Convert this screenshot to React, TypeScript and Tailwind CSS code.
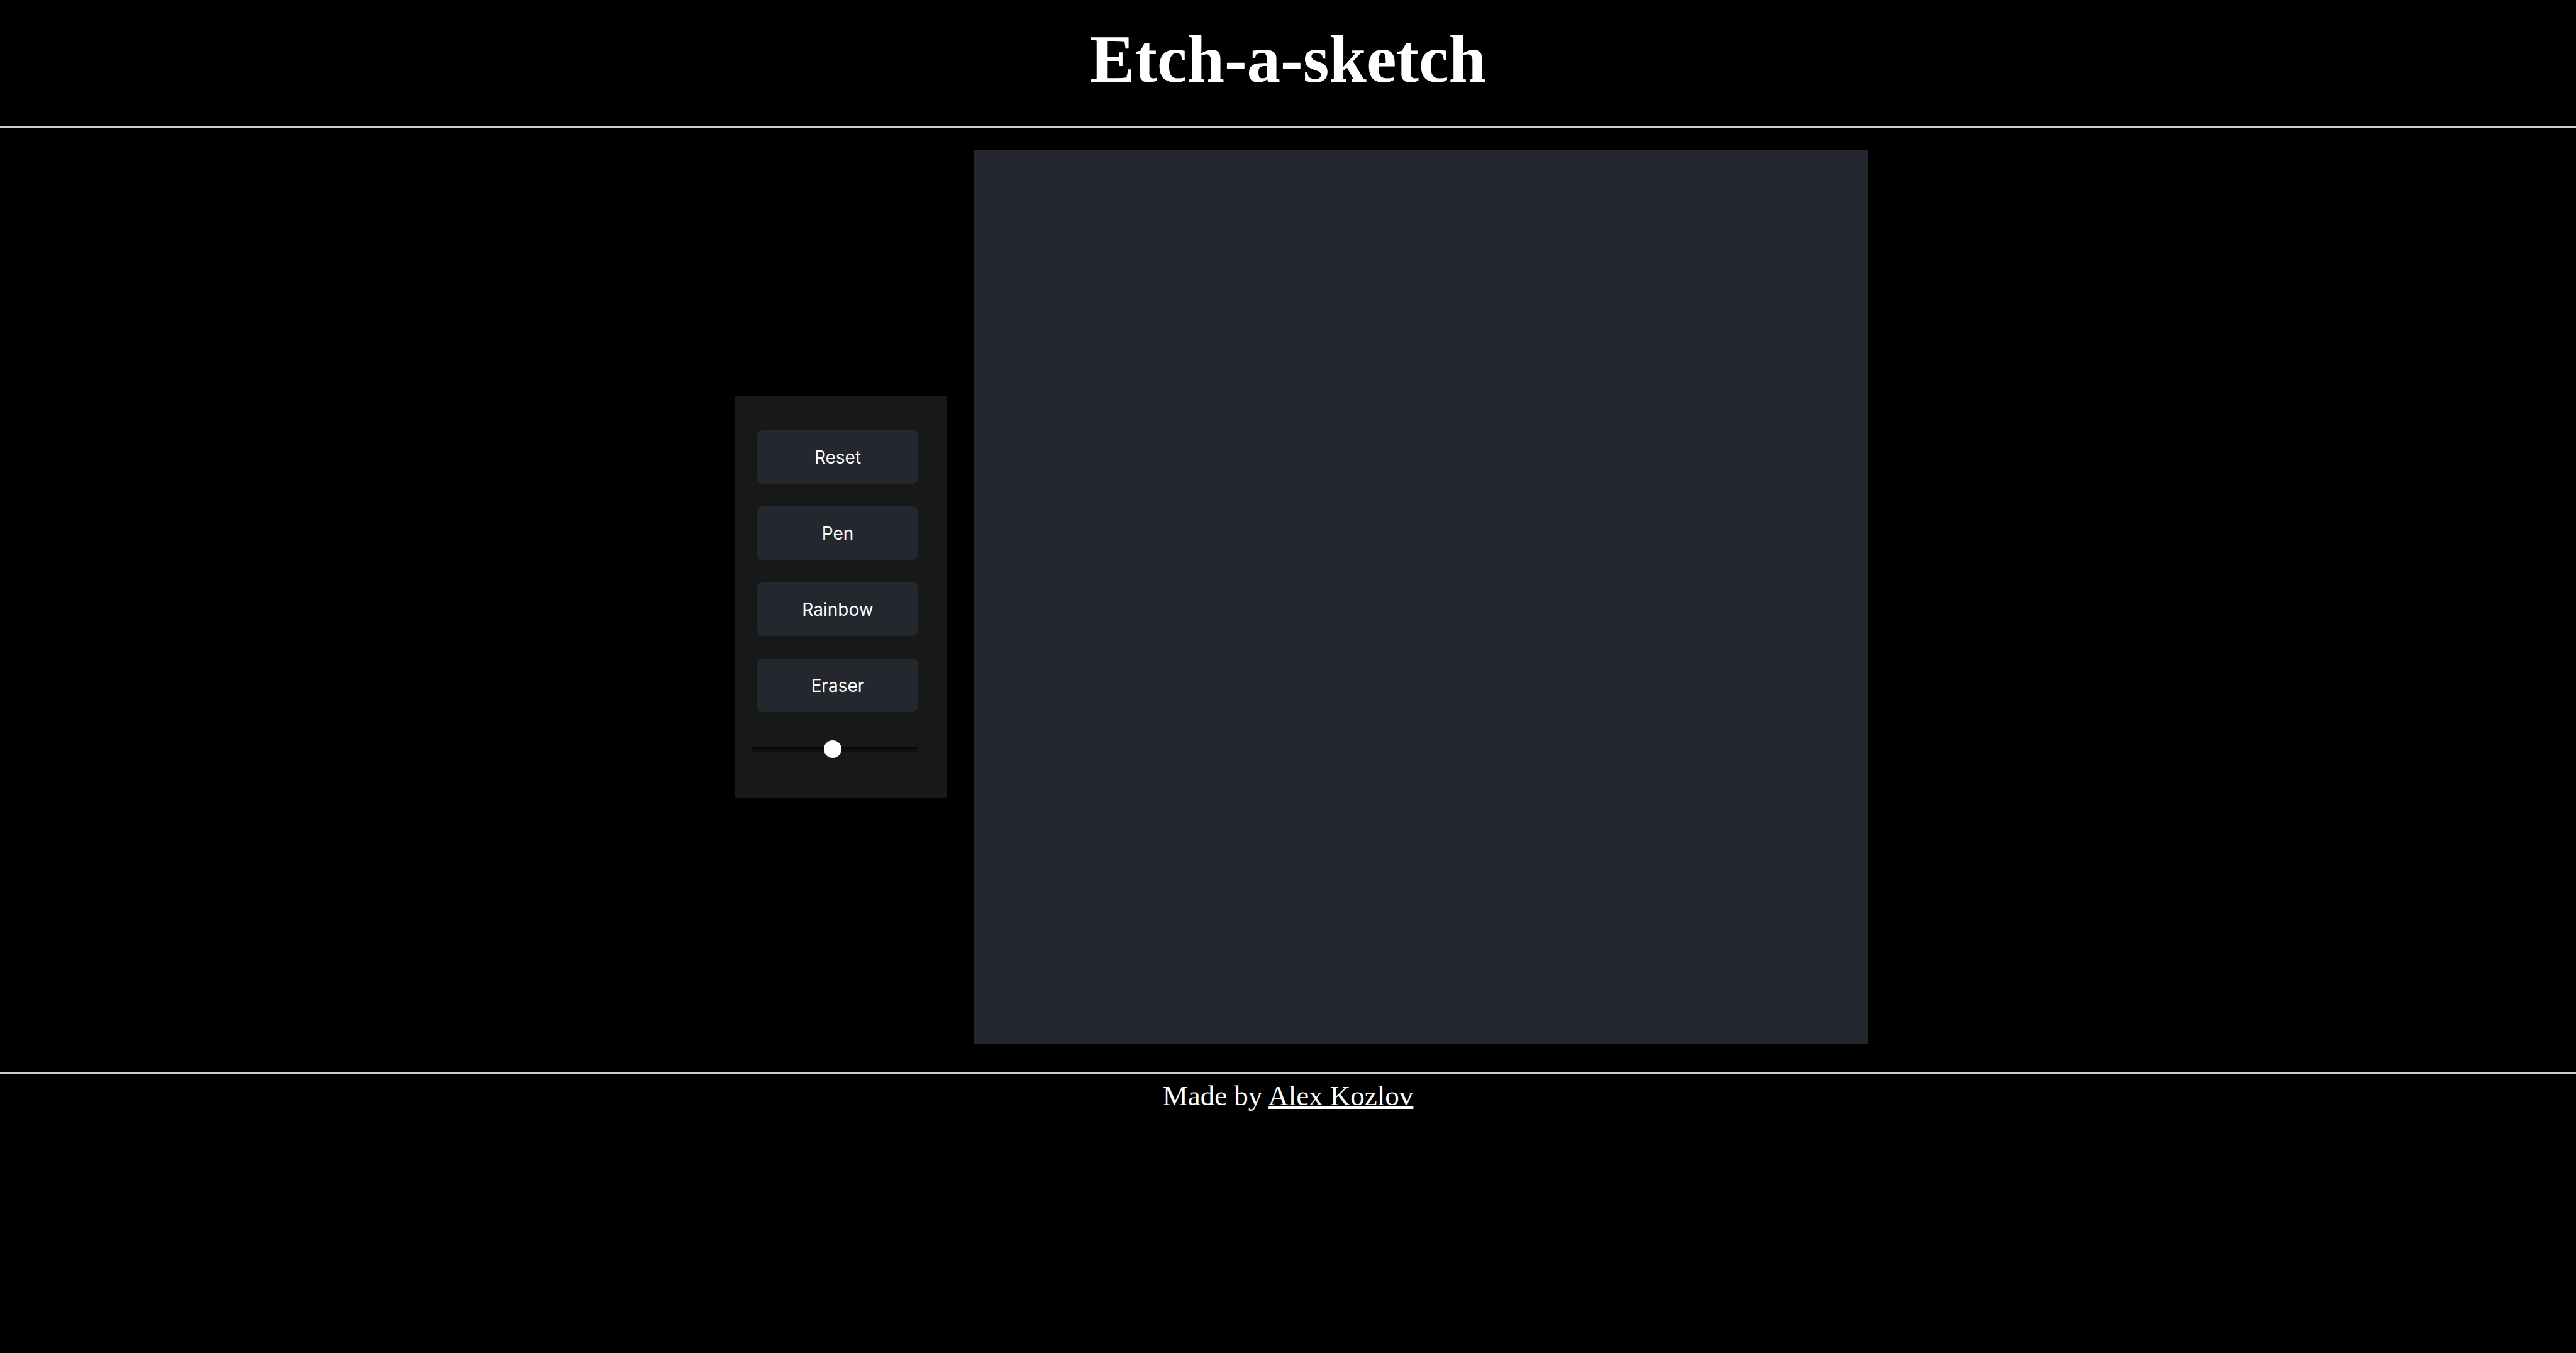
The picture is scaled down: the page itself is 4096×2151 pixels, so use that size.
import { useState } from "react";

const tools = ["Reset", "Pen", "Rainbow", "Eraser"];

function ToolButton({ label }: { label: string }) {
  return (
    <button
      type="button"
      className="h-[85px] w-full cursor-pointer rounded-[9px] bg-[#25272f] font-['Inter',sans-serif] text-[28px] text-white"
    >
      {label}
    </button>
  );
}

function Controls() {
  const [size, setSize] = useState(49);

  return (
    <aside className="flex w-[336px] shrink-0 flex-col bg-[#171918] pt-[55px] pr-[45px] pb-16 pl-[26px]">
      <div className="flex flex-col gap-9 pl-[9px]">
        {tools.map((label) => (
          <ToolButton key={label} label={label} />
        ))}
      </div>
      <input
        type="range"
        aria-label="Grid size"
        min={1}
        max={100}
        value={size}
        onChange={(event) => setSize(Number(event.target.value))}
        className="mt-[45px] h-7 w-full cursor-pointer appearance-none bg-transparent [&::-webkit-slider-runnable-track]:h-[9px] [&::-webkit-slider-runnable-track]:rounded-[4px] [&::-webkit-slider-runnable-track]:bg-linear-to-b [&::-webkit-slider-runnable-track]:from-[#070807] [&::-webkit-slider-runnable-track]:to-[#121312] [&::-webkit-slider-thumb]:mt-[-10px] [&::-webkit-slider-thumb]:size-7 [&::-webkit-slider-thumb]:appearance-none [&::-webkit-slider-thumb]:rounded-full [&::-webkit-slider-thumb]:bg-white"
      />
    </aside>
  );
}

export default function App() {
  return (
    <div className="min-h-screen bg-black font-['Liberation_Serif',serif] text-white">
      <header className="border-b-2 border-[#ccccca] pt-[34px] pb-[47px] text-center">
        <h1 className="text-[107px] leading-[120px] font-bold">Etch-a-sketch</h1>
      </header>
      <main className="flex items-center justify-center gap-11 pt-[35px] pb-[45px] pl-11">
        <Controls />
        <div className="aspect-square w-full max-w-[1422px] bg-[#24272f]" />
      </main>
      <footer className="border-t-2 border-[#ccccca] pt-[11px] text-center text-[45px] leading-[48px]">
        Made by{" "}
        <a href="#" className="underline decoration-4">
          Alex Kozlov
        </a>
      </footer>
    </div>
  );
}
